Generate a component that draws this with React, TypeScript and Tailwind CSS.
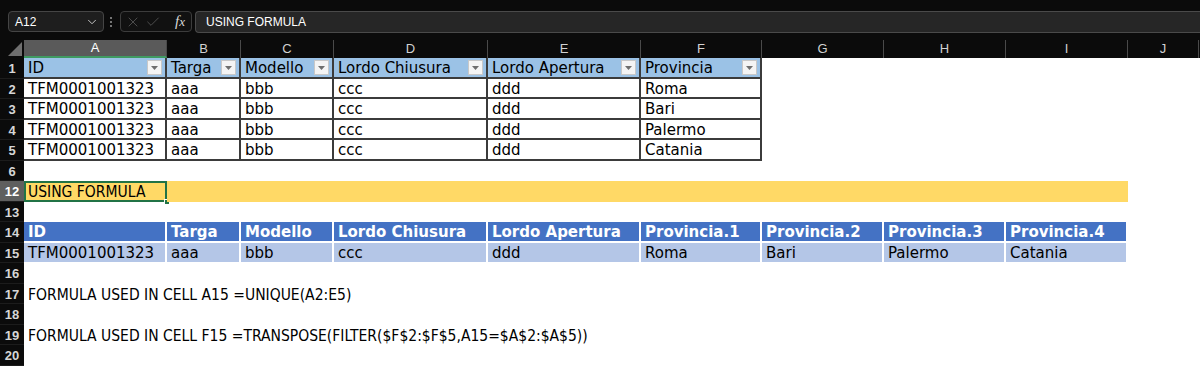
import React from 'react';
import { ChevronDown, X, Check } from 'lucide-react';

const colW = ['w-[143px]', 'w-[74px]', 'w-[93px]', 'w-[154px]', 'w-[153px]', 'w-[121px]', 'w-[122px]', 'w-[122px]', 'w-[122px]', 'w-[71px]'];
const letters = ['A', 'B', 'C', 'D', 'E', 'F', 'G', 'H', 'I', 'J'];

const t1Head = ['ID', 'Targa', 'Modello', 'Lordo Chiusura', 'Lordo Apertura', 'Provincia'];
const t1Rows = [
  ['TFM0001001323', 'aaa', 'bbb', 'ccc', 'ddd', 'Roma'],
  ['TFM0001001323', 'aaa', 'bbb', 'ccc', 'ddd', 'Bari'],
  ['TFM0001001323', 'aaa', 'bbb', 'ccc', 'ddd', 'Palermo'],
  ['TFM0001001323', 'aaa', 'bbb', 'ccc', 'ddd', 'Catania'],
];
const t2Head = ['ID', 'Targa', 'Modello', 'Lordo Chiusura', 'Lordo Apertura', 'Provincia.1', 'Provincia.2', 'Provincia.3', 'Provincia.4'];
const t2Row = ['TFM0001001323', 'aaa', 'bbb', 'ccc', 'ddd', 'Roma', 'Bari', 'Palermo', 'Catania'];

const font = "font-['DejaVu_Sans',sans-serif]";
const condensed = "font-['DejaVu_Sans_Condensed','DejaVu_Sans',sans-serif] text-[15.5px]";

function RowHead({ n, active }: { n: string; active?: boolean }) {
  return (
    <div
      className={`flex w-[24px] shrink-0 items-center justify-center border-b border-[#1c1c1c] pt-[2px] font-['Liberation_Sans',sans-serif] text-[13px] font-bold ${
        active ? 'bg-[#5f5f5f] text-white' : 'bg-[#0b0b0b] text-[#d6d6d6]'
      }`}
    >
      {n}
    </div>
  );
}

function SheetRow({ n, active, children }: { n: string; active?: boolean; children?: React.ReactNode }) {
  return (
    <div className="flex h-[20.5px]">
      <RowHead n={n} active={active} />
      <div className="flex flex-1 bg-white">{children}</div>
    </div>
  );
}

function FilterBtn() {
  return (
    <span className="ml-auto mr-[3px] -mt-[2px] flex h-[15px] w-[15px] shrink-0 items-center justify-center border border-[#c8c8c8] bg-[#f4f4f4]">
      <svg width="7" height="4" viewBox="0 0 7 4">
        <polygon points="0,0 7,0 3.5,4" fill="#6e6e6e" />
      </svg>
    </span>
  );
}

export default function App() {
  return (
    <div className="h-[366px] w-[1200px] overflow-hidden bg-white">
      {/* formula bar */}
      <div className="flex h-[40px] items-center bg-[#0b0b0b] pt-[3px]">
        <div className="ml-[8px] flex h-[21px] w-[96px] items-center rounded-[4px] border border-[#454545] bg-[#1e1e1e] pl-[6px] pr-[4px] font-['Liberation_Sans',sans-serif] text-[12px] text-white">
          <span>A12</span>
          <ChevronDown className="ml-auto text-[#cfcfcf]" size={14} strokeWidth={1.6} />
        </div>
        <div className="mx-[6px] flex flex-col gap-[2px]">
          <span className="h-[2px] w-[2px] rounded-full bg-[#9a9a9a]" />
          <span className="h-[2px] w-[2px] rounded-full bg-[#9a9a9a]" />
          <span className="h-[2px] w-[2px] rounded-full bg-[#9a9a9a]" />
        </div>
        <div className="ml-[2px] flex h-[21px] w-[72px] items-center gap-[4px] rounded-[4px] border border-[#3c3c3c] bg-[#111111] px-[4px] text-[#5c5c5c]">
          <X size={16} strokeWidth={1.2} />
          <Check size={16} strokeWidth={1.2} />
          <span className="ml-auto pr-[2px] font-['Liberation_Serif',serif] text-[15px] italic text-[#d8d8d8]">
            f<span className="text-[13px]">x</span>
          </span>
        </div>
        <div className="ml-[3px] flex h-[22px] flex-1 items-center rounded-l-[4px] border-y border-l border-[#4a4a4a] bg-[#262626] pl-[10px] font-['Liberation_Sans',sans-serif] text-[12px] text-white">
          USING FORMULA
        </div>
      </div>

      {/* column headers */}
      <div className="flex h-[18px] bg-[#0b0b0b]">
        <div className="relative w-[24px] shrink-0">
          <svg className="absolute bottom-[2px] right-[2px]" width="14" height="14" viewBox="0 0 14 14">
            <polygon points="14,0 14,14 0,14" fill="#6f6f6f" />
          </svg>
        </div>
        {letters.map((l, i) => (
          <div
            key={l}
            className={`flex shrink-0 items-center justify-center border-r border-[#4a4a4a] font-['Liberation_Sans',sans-serif] text-[13px] ${colW[i]} ${
              i === 0 ? 'border-b-2 border-b-[#3f9a62] bg-[#5a5a5a] text-white' : 'text-[#d2d2d2]'
            }`}
          >
            {l}
          </div>
        ))}
      </div>

      <div className={`${font} text-[15px] leading-none text-black`}>
        {/* table 1 header */}
        <SheetRow n="1">
          {t1Head.map((h, i) => (
            <div
              key={h}
              className={`flex shrink-0 items-center border-b-2 border-r-2 border-[#3b3b3b] bg-[#9bc2e6] pl-[4px] pt-[3px] ${colW[i]}`}
            >
              <span className="whitespace-nowrap">{h}</span>
              <FilterBtn />
            </div>
          ))}
        </SheetRow>
        {t1Rows.map((r, ri) => (
          <SheetRow key={ri} n={String(ri + 2)}>
            {r.map((c, i) => (
              <div
                key={i}
                className={`flex shrink-0 items-center border-b-2 border-r-2 border-[#3b3b3b] bg-white pl-[4px] pt-[3px] ${colW[i]}`}
              >
                {c}
              </div>
            ))}
          </SheetRow>
        ))}
        <SheetRow n="6" />
        <SheetRow n="12" active>
          {colW.slice(0, 9).map((w, i) => (
            <div key={i} className={`relative flex shrink-0 items-center bg-[#ffd966] ${w}`}>
              {i === 0 && (
                <>
                  <span className={`pl-[4px] pt-[3px] ${condensed} whitespace-nowrap`}>USING FORMULA</span>
                  <span className="absolute inset-0 border-2 border-[#217346]" />
                  <span className="absolute -bottom-[3px] -right-[3px] h-[6px] w-[6px] border border-white bg-[#217346]" />
                </>
              )}
            </div>
          ))}
        </SheetRow>
        <SheetRow n="13" />
        <SheetRow n="14">
          {t2Head.map((h, i) => (
            <div
              key={h}
              className={`flex shrink-0 items-center border-b-2 border-r-2 border-white bg-[#4472c4] pl-[4px] pt-[2px] font-bold text-white ${colW[i]}`}
            >
              <span className="whitespace-nowrap">{h}</span>
            </div>
          ))}
        </SheetRow>
        <SheetRow n="15">
          {t2Row.map((c, i) => (
            <div
              key={i}
              className={`flex shrink-0 items-center border-b border-r-2 border-white bg-[#b4c6e7] pl-[4px] pt-[3px] ${colW[i]}`}
            >
              {c}
            </div>
          ))}
        </SheetRow>
        <SheetRow n="16" />
        <SheetRow n="17">
          <div className={`flex items-center whitespace-nowrap pl-[4px] pt-[3px] ${condensed}`}>
            FORMULA USED IN CELL A15 =UNIQUE(A2:E5)
          </div>
        </SheetRow>
        <SheetRow n="18" />
        <SheetRow n="19">
          <div className={`flex items-center whitespace-nowrap pl-[4px] pt-[3px] ${condensed}`}>
            FORMULA USED IN CELL F15 =TRANSPOSE(FILTER($F$2:$F$5,A15=$A$2:$A$5))
          </div>
        </SheetRow>
        <SheetRow n="20" />
      </div>
    </div>
  );
}
